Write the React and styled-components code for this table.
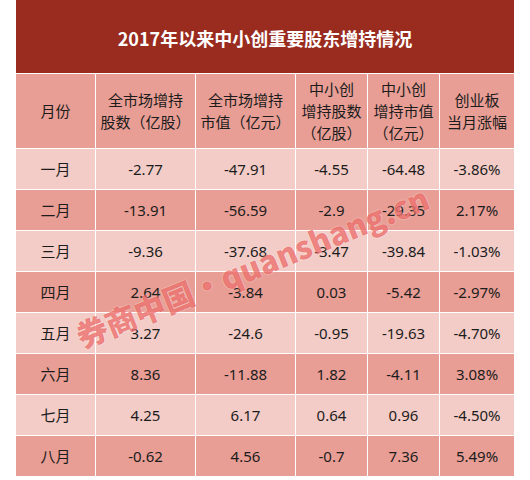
import React from "react";
import styled, { createGlobalStyle } from "styled-components";

const Global = createGlobalStyle`
  html, body { margin: 0; padding: 0; background: #ffffff; }
  body { font-family: "Noto Sans", "Noto Sans CJK SC", sans-serif; }
`;

const Page = styled.div`
  padding-left: 16px;
  width: 498px;
`;

const Board = styled.div`
  position: relative;
  display: flex;
  flex-direction: column;
  gap: 1px;
  background: #ffffff;
  overflow: hidden;
`;

const Title = styled.div`
  height: 73px;
  background: #992b1f;
  color: #ffffff;
  display: flex;
  align-items: center;
  justify-content: center;
  padding-top: 3px;
  box-sizing: border-box;
  font-family: "Noto Sans CJK SC", sans-serif;
  font-weight: 700;
  font-size: 18px;
`;

const Grid = styled.div`
  display: grid;
  grid-template-columns: 79px 99px 99px 71px 71px 74px;
  grid-template-rows: 74px repeat(8, 40px);
  gap: 1px;
  background: #ffffff;
`;

const Cell = styled.div`
  background: ${(p) => (p.$light ? "#f3ccc7" : "#e89e95")};
  color: #1c1c1c;
  display: flex;
  align-items: center;
  justify-content: center;
  text-align: center;
  font-family: "Noto Sans CJK SC", sans-serif;
  font-size: 15px;
  line-height: 22px;
  white-space: nowrap;
  overflow: hidden;
`;

const HeadText = styled.div`
  display: flex;
  flex-direction: column;
  align-items: center;
  line-height: 22px;
`;

const Num = styled.span`
  font-family: "Noto Sans", "Noto Sans CJK SC", sans-serif;
`;

const Watermark = styled.div`
  position: absolute;
  left: 236px;
  top: 266px;
  transform: translate(-50%, -50%) rotate(-22deg);
  font-family: "Noto Sans CJK SC", sans-serif;
  font-weight: 900;
  font-size: 31px;
  color: rgba(226, 44, 40, 0.55);
  text-shadow: 0 0 2px rgba(255, 255, 255, 0.6);
  white-space: nowrap;
  pointer-events: none;
`;

const heads = [
  ["月份"],
  ["全市场增持", "股数（亿股）"],
  ["全市场增持", "市值（亿元）"],
  ["中小创", "增持股数", "（亿股）"],
  ["中小创", "增持市值", "（亿元）"],
  ["创业板", "当月涨幅"],
];

const rows = [
  ["一月", "-2.77", "-47.91", "-4.55", "-64.48", "-3.86%"],
  ["二月", "-13.91", "-56.59", "-2.9", "-29.35", "2.17%"],
  ["三月", "-9.36", "-37.68", "-3.47", "-39.84", "-1.03%"],
  ["四月", "2.64", "-3.84", "0.03", "-5.42", "-2.97%"],
  ["五月", "3.27", "-24.6", "-0.95", "-19.63", "-4.70%"],
  ["六月", "8.36", "-11.88", "1.82", "-4.11", "3.08%"],
  ["七月", "4.25", "6.17", "0.64", "0.96", "-4.50%"],
  ["八月", "-0.62", "4.56", "-0.7", "7.36", "5.49%"],
];

export default function App() {
  return (
    <>
      <Global />
      <Page>
        <Board>
          <Title>2017年以来中小创重要股东增持情况</Title>
          <Grid>
            {heads.map((h, i) => (
              <Cell key={"h" + i}>
                <HeadText>
                  {h.map((line, j) => (
                    <span key={j}>{line}</span>
                  ))}
                </HeadText>
              </Cell>
            ))}
            {rows.map((r, ri) =>
              r.map((v, ci) => (
                <Cell key={ri + "-" + ci} $light={ri % 2 === 0}>
                  {ci === 0 ? v : <Num>{v}</Num>}
                </Cell>
              ))
            )}
          </Grid>
          <Watermark>券商中国·quanshang.cn</Watermark>
        </Board>
      </Page>
    </>
  );
}
